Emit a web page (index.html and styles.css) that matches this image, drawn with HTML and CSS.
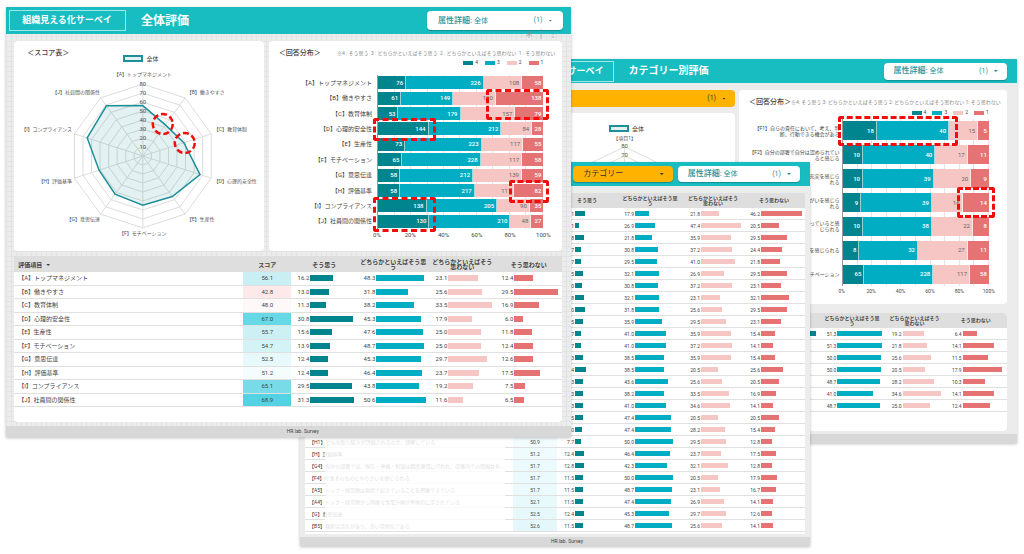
FILE: index.html
```html
<!DOCTYPE html>
<html lang="ja">
<head>
<meta charset="utf-8">
<meta name="viewport" content="width=device-width, initial-scale=1">
<title>組織見える化サーベイ</title>
<link rel="stylesheet" href="styles.css">
</head>
<body>
<main class="stage">

  <section class="window window-category" aria-label="カテゴリー別評価">
    <header class="topbar">
      <a class="brand" href="#">組織見える化サーベイ</a>
      <h2 class="title">カテゴリー別評価</h2>
      <button class="pill" type="button" aria-haspopup="listbox"><span class="pill-label"><b>属性詳細:</b> 全体</span><span class="pill-count">(1)</span><i class="caret"></i></button>
    </header>
    <div class="content">
      <div class="panels">
        <div class="stack">
          <button class="pill pill-orange pill-wide" type="button" aria-label="カテゴリー" aria-haspopup="listbox"><span class="pill-count">(1)</span><i class="caret"></i></button>
          <div class="card radar-card">
            <div class="radar-legend"><i></i>全体</div>
            <svg class="radar" data-radar="category" viewBox="0 0 228 160" role="img" aria-label="スコア表"></svg>
          </div>
        </div>
        <div class="card dist-card">
          <div class="card-head">
            <h3>＜回答分布＞</h3>
            <p class="note">※4: そう思う 3: どちらかといえばそう思う 2: どちらかといえばそう思わない 1: そう思わない</p>
          </div>
          <ul class="legend"><li class="s4">4</li><li class="s3">3</li><li class="s2">2</li><li class="s1">1</li></ul>
          <div class="chart" data-chart="category"></div>
        </div>
      </div>
      <div class="card table-card"><table data-table="category"></table></div>
    </div>
    <footer class="foot"></footer>
  </section>

  <section class="window window-items" aria-label="項目別評価">
    <header class="topbar">
      <button class="pill pill-orange" type="button" aria-haspopup="listbox"><span class="pill-label">カテゴリー</span><i class="caret"></i></button>
      <button class="pill" type="button" aria-haspopup="listbox"><span class="pill-label"><b>属性詳細:</b> 全体</span><span class="pill-count">(1)</span><i class="caret"></i></button>
    </header>
    <div class="content">
      <div class="card table-card"><table data-table="items"></table><div class="veil"></div></div>
    </div>
    <footer class="foot">HR.lab. Survey</footer>
  </section>

  <section class="window window-overall" aria-label="全体評価">
    <header class="topbar">
      <a class="brand" href="#">組織見える化サーベイ</a>
      <h1 class="title">全体評価</h1>
      <button class="pill" type="button" aria-haspopup="listbox"><span class="pill-label"><b>属性詳細:</b> 全体</span><span class="pill-count">(1)</span><i class="caret"></i></button>
      <svg class="tools" viewBox="0 0 32 10" aria-hidden="true"><path d="M4 1v8M1 3l6 4M7 3L1 7M16 0v10" /><path d="M28 1v2M28 4v2M28 7v2" /></svg>
    </header>
    <div class="content">
      <div class="panels">
        <div class="card radar-card">
          <h3>＜スコア表＞</h3>
          <div class="radar-legend"><i></i>全体</div>
          <svg class="radar" data-radar="overall" viewBox="0 0 250 175" role="img" aria-label="スコア表"></svg>
        </div>
        <div class="card dist-card">
          <div class="card-head">
            <h3>＜回答分布＞</h3>
            <p class="note">※4 : そう思う&nbsp; 3 : どちらかといえばそう思う&nbsp; 2 : どちらかといえばそう思わない&nbsp; 1 : そう思わない</p>
          </div>
          <ul class="legend"><li class="s4">4</li><li class="s3">3</li><li class="s2">2</li><li class="s1">1</li></ul>
          <div class="chart" data-chart="overall"></div>
        </div>
      </div>
      <div class="card table-card"><table data-table="overall"></table></div>
    </div>
    <footer class="foot">HR.lab. Survey</footer>
  </section>

</main>
<script src="script.js"></script>
</body>
</html>
```
FILE: styles.css
```css
:root {
  --brand: #17bdc1;
  --s4: #00858f;
  --s3: #00adc2;
  --s2: #f5c6c3;
  --s1: #e57373;
  --text: #444;
}

* { box-sizing: border-box; }

body {
  margin: 0;
  background: #fff;
  color: var(--text);
  font-family: Roboto, "Noto Sans CJK JP", sans-serif;
  font-size: 6px;
  line-height: 1;
}

h1, h2, h3, p, ul { margin: 0; padding: 0; }
ul { list-style: none; }

.stage {
  position: relative;
  min-height: 100vh;
  overflow: hidden;
}

/* Windows */
.window {
  position: absolute;
  background: #ececec;
  box-shadow: 0 1px 3px rgba(0, 0, 0, .25);
}

.window-overall {
  left: .6%;
  top: 7px;
  width: 55.2%;
  background:
    repeating-linear-gradient(0deg, #e3e3e3 0 1px, transparent 1px 5px),
    repeating-linear-gradient(90deg, #e3e3e3 0 1px, transparent 1px 5px),
    #ececec;
}

.window-category { left: 49.1%; top: 59px; width: 50.2%; }
.window-items { left: 29.3%; top: 162px; width: 49.8%; }

.topbar {
  position: relative;
  display: flex;
  align-items: center;
  height: 24px;
  padding: 0 10px 0 3px;
  background: var(--brand);
}

.window-overall .topbar { height: 27px; padding: 0 8px 0 3px; }

.brand {
  border: 1px solid rgba(255, 255, 255, .6);
  padding: 5px 9px 5px 7px;
  color: #fff;
  font-size: 9px;
  font-weight: 700;
  text-decoration: none;
  white-space: nowrap;
}

.window-overall .brand { padding: 5px 13px 5px 12px; }

.title {
  flex: 1;
  margin-left: 15px;
  color: #fff;
  font-size: 10px;
  font-weight: 700;
}

.window-overall .title { font-size: 12px; }

.pill {
  display: flex;
  align-items: center;
  width: 24.6%;
  height: 17px;
  padding: 0 9px 0 10px;
  border: 0;
  border-radius: 4px;
  background: #fff;
  color: #238f98;
  font: inherit;
  font-size: 7px;
  box-shadow: 0 1px 1px rgba(0, 0, 0, .25);
  text-align: left;
}

.window-overall .pill { height: 19px; padding: 0 11px; }
.pill b { font-size: 8px; font-weight: 500; }
.pill-label { flex: 1; white-space: nowrap; }
.pill-count { margin-left: auto; margin-right: 6px; }

.caret {
  width: 4px;
  height: 2px;
  background: currentColor;
  clip-path: polygon(0 0, 100% 0, 50% 100%);
}

.pill-orange { background: #ffb300; color: #333; }
.pill-orange .pill-label { font-size: 8px; }
.pill-wide { width: 100%; box-shadow: none; }

.window-items .topbar { gap: 5px; justify-content: flex-end; }
.window-items .pill { height: 16px; }
.window-items .pill-orange { width: 20%; }

.tools {
  position: absolute;
  right: 14px;
  top: 22px;
  width: 32px;
  height: 10px;
  fill: none;
  stroke: #888;
  stroke-opacity: .5;
}

/* Panels */
.content { padding: 7px 10px 3px 7px; }
.window-overall .content { padding: 7px 9px 4px 8px; }

.panels { display: grid; grid-template-columns: 228fr 265fr; gap: 4px; }
.window-overall .panels { grid-template-columns: 250fr 294fr; gap: 5px; }

.stack { display: flex; flex-direction: column; gap: 6px; }
.stack .card { flex: 1; }

.card { background: #fff; border-radius: 4px; }

.card h3 {
  color: var(--text);
  font-size: 7px;
  line-height: 8px;
  font-weight: 500;
  white-space: nowrap;
}

/* Radar */
.radar-card { padding: 8px 0; }
.radar-card h3 { padding-left: 13px; }
.window-overall .radar-card { padding-bottom: 10px; }

.radar-legend {
  display: flex;
  justify-content: center;
  align-items: center;
  gap: 3px;
  padding: 4px 0 4px 8px;
}

.window-overall .radar-legend { margin-top: -2px; padding: 0 0 4px 4px; }

.radar-legend i {
  width: 20px;
  height: 7px;
  border: 2px solid #1d8f98;
  background: #e3f1f3;
}

.radar { display: block; width: 100%; height: 175px; overflow: visible; }
.stack .radar { height: 160px; }
.radar text { fill: #555; font-size: 5px; dominant-baseline: central; }
.radar .tick { fill: #555; font-size: 6px; text-anchor: middle; }
.radar .web { fill: none; stroke: #dcdcdc; stroke-width: 1; }
.radar .area { fill: #1d8f98; fill-opacity: .12; stroke: #1d8f98; stroke-width: 1.5; }
.radar .mark { fill: none; stroke: #f20d0d; stroke-width: 2.5; stroke-dasharray: 6 3; }

/* Distribution */
.dist-card { padding: 8px 18px 9px 10px; }
.window-overall .dist-card { padding: 8px 19px 10px 10px; }

.card-head { display: flex; align-items: center; height: 8px; margin-right: -12px; }
.note { flex: 1; color: #888; font-size: 5px; text-align: right; white-space: nowrap; }

.legend {
  display: flex;
  justify-content: flex-end;
  gap: 6px;
  padding: 4px 0;
  font-size: 5px;
}

.window-overall .legend { gap: 7px; padding: 3px 0 10px; }
.legend li { display: flex; align-items: center; gap: 2px; }
.legend li::before { content: ""; width: 10px; height: 4px; background: var(--tone); }

.s4 { --tone: var(--s4); }
.s3 { --tone: var(--s3); }
.s2 { --tone: var(--s2); }
.s1 { --tone: var(--s1); }

.chart { display: grid; grid-template: 167px auto / 88fr 149fr; }
.window-overall .chart { grid-template: 154px auto / 98fr 166fr; }

.labels, .plot { display: flex; flex-direction: column; }

.labels span {
  flex: 1;
  display: flex;
  align-items: center;
  justify-content: flex-end;
  padding-right: 2px;
  font-size: 5px;
  line-height: 6px;
  text-align: right;
  white-space: nowrap;
}

.window-overall .labels span { padding-right: 5px; font-size: 6px; }

.plot {
  position: relative;
  border-left: 1px solid #999;
  background: repeating-linear-gradient(90deg, transparent 0 calc(10% - 1px), #e4e4e4 calc(10% - 1px) 10%);
}

.bar { flex: 1; display: flex; align-items: center; }

.seg {
  flex-basis: 0;
  height: 19px;
  display: flex;
  align-items: center;
  justify-content: flex-end;
  padding-right: 2px;
  border-right: 1px solid rgba(255, 255, 255, .6);
  background: var(--tone);
  color: #fff;
  font-weight: 500;
  min-width: 0;
}

.seg.s2 { color: #666; font-weight: 400; }
.seg:last-child { border-right: 0; }
.window-overall .seg { height: 13px; }

.mark-box {
  position: absolute;
  border: 3px dashed #f20d0d;
  border-radius: 3px;
}

.axis {
  grid-column: 2;
  display: flex;
  justify-content: space-between;
  padding-top: 3px;
  font-size: 5px;
}

.window-overall .axis { font-size: 6px; }
.axis span { display: flex; justify-content: center; width: 0; }

/* Tables */
.table-card { position: relative; margin-top: 9px; padding-bottom: 19px; overflow: hidden; }
.window-overall .table-card { margin-top: 5px; padding-bottom: 15px; border-radius: 0 0 4px 4px; }
.window-items .table-card { margin-top: 0; padding-bottom: 2px; border-radius: 0; }

table { width: 100%; table-layout: fixed; border-collapse: separate; border-spacing: 0; font-size: 5px; }
.window-overall table { height: 151px; font-size: 6px; }

th {
  height: 15px;
  padding: 0;
  background: #dedede;
  font-weight: 700;
  line-height: 5px;
  text-align: center;
  white-space: nowrap;
}

.window-overall th { height: 16px; }
th:first-child { padding-left: 4px; text-align: left; }
th .caret { display: inline-block; margin-left: 4px; vertical-align: middle; }

td { height: 12px; padding: 0; border-bottom: 1px solid #e0e0e0; white-space: nowrap; overflow: hidden; line-height: 6px; }
td:first-child { padding-left: 4px; text-overflow: ellipsis; }
.score { text-align: center; }

.meter { display: flex; align-items: center; }
.meter span { flex: none; width: 18px; padding-right: 1px; text-align: right; }
.window-overall .meter span { width: 19px; }
.meter div { flex: 1; }
.meter i { display: block; height: 5px; background: var(--tone); }
.window-overall .meter i { height: 6px; }

.veil {
  position: absolute;
  left: 4%;
  width: 36%;
  top: 15px;
  bottom: 3px;
  background: rgba(255, 255, 255, .82);
}

.foot {
  height: 9px;
  padding: 2px 0 0 24px;
  background: #d8d8d8;
  font-size: 5px;
  text-align: center;
}

.window-overall .foot { height: 11px; padding: 3px 0 0 28px; }
.window-items .content { padding: 7px 5px 3px 5px; }
```
FILE: script.js
```js
const TONES = ["s4", "s3", "s2", "s1"];

const RADARS = {
  overall: {
    cx: 129, cy: 90, r: 72,
    values: [56.1, 42.8, 48.0, 67.0, 55.7, 54.7, 52.5, 51.2, 65.1, 68.9],
    labels: [
      ["【A】トップマネジメント", 129, 8, "middle"], ["【B】働きやすさ", 173, 26, "start"],
      ["【C】教育体制", 200, 63, "start"], ["【D】心理的安全性", 200, 115, "start"],
      ["【E】生産性", 173, 153, "start"], ["【F】モチベーション", 129, 167, "middle"],
      ["【G】意思伝達", 86, 153, "end"], ["【H】評価基準", 58, 115, "end"],
      ["【I】コンプライアンス", 58, 63, "end"], ["【J】社員間の関係性", 86, 26, "end"]
    ],
    marks: [[149, 58], [171, 77]]
  },
  category: {
    cx: 116, cy: 83, r: 73,
    values: [61, 54, 52, 50, 53, 49, 55],
    labels: [["【項目1】", 116, 1, "middle"]],
    marks: []
  }
};

const CHARTS = {
  overall: {
    rows: [
      ["【A】トップマネジメント", 76, 226, 108, 58], ["【B】働きやすさ", 61, 149, 120, 138],
      ["【C】教育体制", 53, 179, 157, 79], ["【D】心理的安全性", 144, 212, 84, 28],
      ["【E】生産性", 73, 223, 117, 55], ["【F】モチベーション", 65, 228, 117, 58],
      ["【G】意思伝達", 58, 212, 139, 59], ["【H】評価基準", 58, 217, 111, 82],
      ["【I】コンプライアンス", 138, 205, 90, 35], ["【J】社員間の関係性", 130, 210, 48, 27]
    ],
    marks: [[65.5, 9, 38, 20], [-3, 28, 38, 15], [79.5, 68, 24, 15], [-3, 79, 38, 23]]
  },
  category: {
    rows: [
      ["【F1】自らの責任において、考え、判<br>断、行動できる機会がある", 18, 40, 15, 5],
      ["【F2】自分の部署で自分は認められてい<br>ると感じる", 10, 40, 17, 11],
      ["【F3】仕事を通じて成長の充実を感じら<br>れる", 10, 39, 20, 9],
      ["【F4】仕事そのものにやりがいを感じら<br>れる", 9, 39, 16, 14],
      ["【F5】自分の仕事が役に立っていると感<br>じられる", 10, 38, 22, 8],
      ["【F6】自分の成長を感じられる", 8, 32, 27, 11],
      ["【F】モチベーション", 65, 228, 117, 58]
    ],
    marks: [[-3, -2, 82, 18], [78, 41, 26, 18]]
  }
};

const TABLES = {
  overall: {
    cols: [229, 48, 66, 72, 66, 67], max: [33.5, 54, 36, 32.5],
    rows: [
      ["【A】トップマネジメント", 56.1, "#c9eff4", 16.2, 48.3, 23.1, 12.4],
      ["【B】働きやすさ", 42.8, "#fde9e9", 13.0, 31.8, 25.6, 29.5],
      ["【C】教育体制", 48.0, "#fff8f8", 11.3, 38.2, 33.5, 16.9],
      ["【D】心理的安全性", 67.0, "#66d8e6", 30.8, 45.3, 17.9, 6.0],
      ["【E】生産性", 55.7, "#cdf0f5", 15.6, 47.6, 25.0, 11.8],
      ["【F】モチベーション", 54.7, "#d4f3f7", 13.9, 48.7, 25.0, 12.4],
      ["【G】意思伝達", 52.5, "#e8f9fb", 12.4, 45.3, 29.7, 12.6],
      ["【H】評価基準", 51.2, "#f4fcfe", 12.4, 46.4, 23.7, 17.5],
      ["【I】コンプライアンス", 65.1, "#79dbe8", 29.5, 43.8, 19.2, 7.5],
      ["【J】社員間の関係性", 68.9, "#52d2e2", 31.3, 50.6, 11.6, 6.5]
    ]
  },
  category: {
    cols: [207, 42, 60, 65, 60, 62], max: [25, 54, 38, 20],
    rows: [
      ["", "", "", 23.1, 51.3, 19.2, 6.4], ["", "", "", 12.8, 51.3, 21.8, 14.1],
      ["", "", "", 12.9, 50.0, 25.6, 11.5], ["", "", "", 11.5, 50.0, 20.5, 17.9],
      ["", "", "", 12.8, 48.7, 28.2, 10.3], ["", "", "", 10.3, 41.0, 34.6, 14.1],
      ["", "", "", 13.9, 48.7, 25.0, 12.4]
    ]
  },
  items: {
    cols: [208, 44, 60, 66, 60, 62], max: [57, 63, 50, 50],
    rows: [
      ["", "", "", 14.1, 17.9, 21.8, 46.2], ["", "", "", 5.1, 26.9, 47.4, 20.5],
      ["", "", "", 12.8, 21.8, 35.9, 29.5], ["", "", "", 7.7, 30.8, 37.2, 24.4],
      ["", "", "", 7.7, 29.5, 41.0, 21.8], ["", "", "", 11.5, 32.1, 26.9, 29.5],
      ["", "", "", 9.0, 30.8, 37.2, 23.1], ["", "", "", 12.8, 32.1, 23.1, 32.1],
      ["", "", "", 13.0, 31.8, 25.6, 29.5], ["", "", "", 11.5, 35.9, 29.5, 23.1],
      ["", "", "", 7.7, 41.0, 35.9, 15.4], ["", "", "", 7.7, 41.0, 37.2, 14.1],
      ["", "", "", 10.3, 38.5, 35.9, 15.4], ["", "", "", 15.4, 38.5, 20.5, 25.6],
      ["", "", "", 10.3, 43.6, 25.6, 20.5], ["", "", "", 11.3, 38.2, 33.5, 16.9],
      ["", "", "", 10.3, 41.0, 34.6, 14.1], ["", "", "", 11.5, 47.4, 20.5, 20.5],
      ["", "", "", 9.0, 47.4, 28.2, 15.4],
      ["【H1】どんな取り組みが評価されるのか、理解している", 50.9, "#f2fcfd", 7.7, 50.0, 29.5, 12.8],
      ["【H】評価基準", 51.2, "#f0fbfd", 12.4, 46.4, 23.7, 17.5],
      ["【G4】自分の部署では、報告・連絡・相談は都度適切に行われ、部署内での情報共有...", 51.7, "#ebfafc", 12.8, 42.3, 32.1, 12.8],
      ["【F4】仕事そのものにやりがいを感じられる", 51.7, "#ebfafc", 11.5, 50.0, 20.5, 17.9],
      ["【A5】トップ・経営陣は現場で起きていることを把握できている", 51.7, "#ebfafc", 11.5, 48.7, 23.1, 16.7],
      ["【A4】トップ・経営陣から明確な事業計画が具体的に示されている", 52.1, "#e8f9fb", 11.5, 47.4, 26.9, 14.1],
      ["【G】意思伝達", 52.5, "#e6f8fa", 12.4, 45.3, 29.7, 12.6],
      ["【B5】職場は活気があり、良い雰囲気である", 52.6, "#e4f7fa", 11.5, 48.7, 25.6, 14.1]
    ]
  }
};

const fmt = v => (v === "" ? "" : v.toFixed(1));

function drawRadar(svg, { cx, cy, r, values, labels, marks }) {
  const n = values.length;
  const point = (i, len) => {
    const a = (Math.PI * 2 * i) / n - Math.PI / 2;
    return [cx + Math.cos(a) * len, cy + Math.sin(a) * len].map(v => v.toFixed(1)).join(",");
  };
  const ring = len => values.map((_, i) => point(i, len)).join(" ");
  let out = `<polygon class="area" points="${values.map((v, i) => point(i, (v / 80) * r)).join(" ")}"/>`;
  for (let k = 1; k <= 8; k++) out = `<polygon class="web" points="${ring((k / 8) * r)}"/>` + out;
  for (let i = 0; i < n; i++) out = `<path class="web" d="M${cx},${cy}L${point(i, r)}"/>` + out;
  for (let k = 1; k <= 8; k++) out += `<text class="tick" x="${cx}" y="${cy - (k / 8) * r - 1}">${k * 10}</text>`;
  for (const [t, x, y, anchor] of labels) out += `<text x="${x}" y="${y}" text-anchor="${anchor}">${t}</text>`;
  for (const [x, y] of marks) out += `<circle class="mark" cx="${x}" cy="${y}" r="10"/>`;
  svg.innerHTML = out;
}

function drawChart(el, { rows, marks }) {
  const labels = rows.map(r => `<span>${r[0]}</span>`).join("");
  const bars = rows.map(r => `<div class="bar">${r.slice(1).map((v, i) =>
    `<div class="seg ${TONES[i]}" style="flex-grow:${v}">${v}</div>`).join("")}</div>`).join("");
  const boxes = marks.map(([x, y, w, h]) =>
    `<div class="mark-box" style="left:${x}%;top:${y}%;width:${w}%;height:${h}%"></div>`).join("");
  const ticks = [0, 20, 40, 60, 80, 100].map(v => `<span>${v}%</span>`).join("");
  el.innerHTML = `<div class="labels">${labels}</div><div class="plot">${bars}${boxes}</div><div class="axis">${ticks}</div>`;
}

function drawTable(el, { cols, max, rows }) {
  const total = cols.reduce((a, b) => a + b);
  const widths = cols.map(c => `<col style="width:${(c / total) * 100}%">`).join("");
  const heads = ['評価項目<i class="caret"></i>', "スコア", "そう思う", "どちらかといえばそう思<br>う", "どちらかといえばそう<br>思わない", "そう思わない"];
  const body = rows.map(([name, score, tint, ...vals]) =>
    `<tr><td>${name}</td><td class="score"${tint ? ` style="background:${tint}"` : ""}>${fmt(score)}</td>` +
    vals.map((v, i) => `<td><div class="meter ${TONES[i]}"><span>${fmt(v)}</span><div><i style="width:${((v / max[i]) * 100).toFixed(1)}%"></i></div></div></td>`).join("") +
    "</tr>").join("");
  el.innerHTML = `<colgroup>${widths}</colgroup><thead><tr>${heads.map(h => `<th scope="col">${h}</th>`).join("")}</tr></thead><tbody>${body}</tbody>`;
}

document.querySelectorAll("[data-radar]").forEach(el => drawRadar(el, RADARS[el.dataset.radar]));
document.querySelectorAll("[data-chart]").forEach(el => drawChart(el, CHARTS[el.dataset.chart]));
document.querySelectorAll("[data-table]").forEach(el => drawTable(el, TABLES[el.dataset.table]));
```
